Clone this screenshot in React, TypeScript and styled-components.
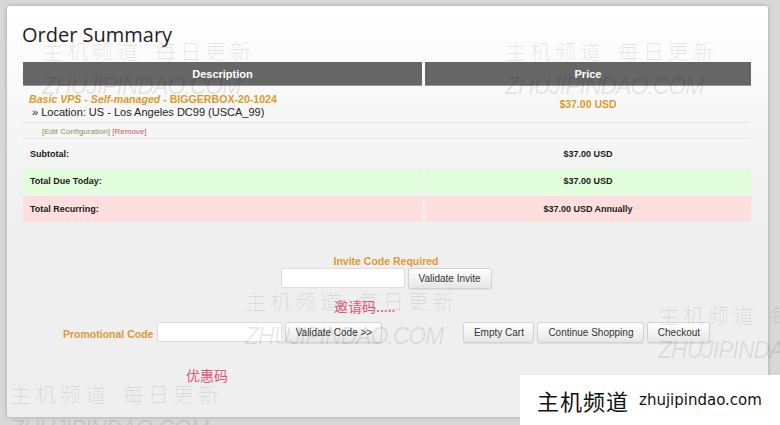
import styled, { createGlobalStyle } from 'styled-components';

const GlobalStyle = createGlobalStyle`
  html, body {
    margin: 0;
    padding: 0;
    background: #d8d8d8;
    font-family: "Liberation Sans", Arial, sans-serif;
  }
`;

const Page = styled.div`
  position: relative;
  width: 780px;
  height: 425px;
  box-sizing: border-box;
  padding: 6px 12px 8px 7px;
  overflow: hidden;
`;

const Card = styled.div`
  height: 100%;
  box-sizing: border-box;
  padding: 16px 17px 0 16px;
  border-radius: 3px;
  background: linear-gradient(to bottom, #ffffff 0px, #f6f6f6 120px, #efefef 230px, #efefef 100%);
  box-shadow: 0 0 4px rgba(0, 0, 0, 0.25);
`;

const Title = styled.h1`
  margin: 0 0 0 -1px;
  height: 40px;
  font-family: "Open Sans", sans-serif;
  font-weight: 400;
  font-size: 20px;
  line-height: 26px;
  color: #1e1e1e;
`;

const Row = styled.div<{ $h: number; $line?: boolean }>`
  display: grid;
  grid-template-columns: 400px 1fr;
  column-gap: 2px;
  height: ${(p) => p.$h}px;
  border-bottom: ${(p) => (p.$line ? '1px solid #e6e6e6' : 'none')};
  margin-bottom: 2px;
`;

const HeadRow = styled.div`
  display: grid;
  grid-template-columns: 399px 1fr;
  column-gap: 3px;
  height: 24px;
`;

const HeadCell = styled.div`
  display: flex;
  align-items: center;
  justify-content: center;
  background: #666666;
  color: #ffffff;
  font-weight: bold;
  font-size: 11px;
  border-bottom: 1px solid #9a9a9a;
`;

const Cell = styled.div<{ $center?: boolean; $bg?: string }>`
  display: flex;
  flex-direction: column;
  justify-content: center;
  align-items: ${(p) => (p.$center ? 'center' : 'flex-start')};
  padding-left: ${(p) => (p.$center ? '0' : '7px')};
  background: ${(p) => p.$bg ?? 'transparent'};
`;

const ItemCell = styled(Cell)`
  padding-top: 4px;
`;

const Product = styled.div`
  font-size: 10.6px;
  font-weight: bold;
  color: #dd9a2a;
  line-height: 13px;
  margin-left: -1px;
`;

const Location = styled.div`
  font-size: 11px;
  line-height: 13px;
  color: #222;
  padding-left: 2px;
`;

const Price = styled.div`
  font-size: 10.5px;
  font-weight: bold;
  color: #dd9a2a;
`;

const SmallLinks = styled.div`
  font-size: 8px;
  padding-left: 12px;
  color: #8a9458;

  span {
    color: #d9535d;
  }
`;

const TotalText = styled.div`
  font-size: 9px;
  font-weight: bold;
  color: #1a1a1a;
`;

const InviteBlock = styled.div`
  margin-top: 33px;
  display: flex;
  flex-direction: column;
  align-items: center;
  padding-right: 2px;
`;

const Label = styled.div`
  font-size: 10.5px;
  font-weight: bold;
  color: #db9a35;
`;

const InputRow = styled.div`
  display: flex;
  gap: 3px;
  margin-top: 1px;
`;

const TextInput = styled.div<{ $w: number }>`
  width: ${(p) => p.$w}px;
  height: 20px;
  box-sizing: border-box;
  background: #ffffff;
  border: 1px solid #dcdcdc;
  border-radius: 2px;
`;

const Button = styled.div<{ $w: number }>`
  width: ${(p) => p.$w}px;
  height: 21px;
  box-sizing: border-box;
  display: flex;
  align-items: center;
  justify-content: center;
  font-size: 10px;
  color: #333;
  background: linear-gradient(to bottom, #ffffff, #e6e6e6);
  border: 1px solid #d2d2d2;
  border-radius: 3px;
  box-shadow: 0 1px 1px rgba(0, 0, 0, 0.08);
`;

const Note = styled.div<{ $left: number; $top: number }>`
  margin-left: ${(p) => p.$left}px;
  margin-top: ${(p) => p.$top}px;
  font-family: "Noto Sans CJK SC", sans-serif;
  font-size: 14px;
  line-height: 18px;
  color: #e5566f;
`;

const PromoRow = styled.div`
  display: flex;
  align-items: center;
  margin-top: 6px;
  padding-left: 40px;
`;

const PromoLabel = styled(Label)`
  margin-right: 4px;
  margin-top: 3px;
`;

const CartGroup = styled.div`
  display: flex;
  gap: 3px;
  margin-left: 81px;
`;

const Watermark = styled.div<{ $x: number; $y: number }>`
  position: absolute;
  left: ${(p) => p.$x}px;
  top: ${(p) => p.$y}px;
  pointer-events: none;
  white-space: nowrap;
`;

const WmCn = styled.div`
  font-family: "Noto Sans CJK SC", sans-serif;
  font-weight: 300;
  font-size: 21px;
  line-height: 24px;
  letter-spacing: 4px;
  color: rgba(0, 0, 0, 0.1);
  word-spacing: 4px;
`;

const WmEn = styled.div`
  margin-top: 12px;
  font-family: "Liberation Sans", sans-serif;
  font-style: italic;
  font-size: 23px;
  line-height: 24px;
  letter-spacing: -1px;
  color: rgba(0, 0, 0, 0.09);
`;

const Logo = styled.div`
  position: absolute;
  right: 0;
  bottom: 0;
  width: 260px;
  height: 50px;
  background: #ffffff;
  display: flex;
  align-items: center;
  gap: 10px;
  padding-left: 17px;
  box-sizing: border-box;
`;

const LogoCn = styled.span`
  font-family: "Noto Sans CJK SC", sans-serif;
  font-size: 22px;
  color: #111;
  letter-spacing: 1px;
`;

const LogoEn = styled.span`
  font-family: "DejaVu Sans", sans-serif;
  font-size: 15px;
  color: #111;
`;

const marks = [
  { x: 42, y: 38 },
  { x: 505, y: 38 },
  { x: 245, y: 288 },
  { x: 658, y: 302 },
  { x: 10, y: 381 },
];

export default function App() {
  return (
    <Page>
      <GlobalStyle />
      <Card>
        <Title>Order Summary</Title>
        <HeadRow>
          <HeadCell>Description</HeadCell>
          <HeadCell>Price</HeadCell>
        </HeadRow>
        <Row $h={36} $line>
          <ItemCell>
            <Product>
              <em>Basic VPS - Self-managed</em> - BIGGERBOX-20-1024
            </Product>
            <Location>» Location: US - Los Angeles DC99 (USCA_99)</Location>
          </ItemCell>
          <Cell $center>
            <Price>$37.00 USD</Price>
          </Cell>
        </Row>
        <Row $h={13} $line>
          <Cell>
            <SmallLinks>
              [Edit Configuration] <span>[Remove]</span>
            </SmallLinks>
          </Cell>
          <Cell />
        </Row>
        <Row $h={25}>
          <Cell>
            <TotalText>Subtotal:</TotalText>
          </Cell>
          <Cell $center>
            <TotalText>$37.00 USD</TotalText>
          </Cell>
        </Row>
        <Row $h={26}>
          <Cell $bg="#e2fddb">
            <TotalText>Total Due Today:</TotalText>
          </Cell>
          <Cell $center $bg="#e2fddb">
            <TotalText>$37.00 USD</TotalText>
          </Cell>
        </Row>
        <Row $h={26}>
          <Cell $bg="#fedfdf">
            <TotalText>Total Recurring:</TotalText>
          </Cell>
          <Cell $center $bg="#fedfdf">
            <TotalText>$37.00 USD Annually</TotalText>
          </Cell>
        </Row>

        <InviteBlock>
          <Label>Invite Code Required</Label>
          <InputRow>
            <TextInput $w={124} />
            <Button $w={84}>Validate Invite</Button>
          </InputRow>
        </InviteBlock>
        <Note $left={311} $top={8}>
          邀请码.....
        </Note>
        <PromoRow>
          <PromoLabel>Promotional Code</PromoLabel>
          <InputRow>
            <TextInput $w={125} />
            <Button $w={97}>Validate Code &gt;&gt;</Button>
          </InputRow>
          <CartGroup>
            <Button $w={71}>Empty Cart</Button>
            <Button $w={107}>Continue Shopping</Button>
            <Button $w={63}>Checkout</Button>
          </CartGroup>
        </PromoRow>
        <Note $left={163} $top={23}>
          优惠码
        </Note>
      </Card>

      {marks.map((m) => (
        <Watermark key={`${m.x}-${m.y}`} $x={m.x} $y={m.y}>
          <WmCn>主机频道 每日更新</WmCn>
          <WmEn>ZHUJIPINDAO.COM</WmEn>
        </Watermark>
      ))}

      <Logo>
        <LogoCn>主机频道</LogoCn>
        <LogoEn>zhujipindao.com</LogoEn>
      </Logo>
    </Page>
  );
}
